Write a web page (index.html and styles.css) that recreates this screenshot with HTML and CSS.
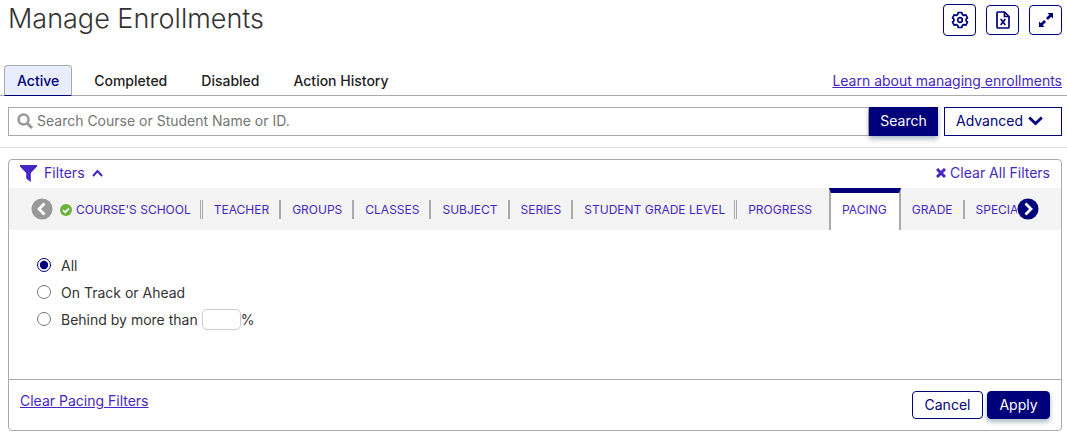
FILE: index.html
```html
<!DOCTYPE html>
<html lang="en">
<head>
    <meta charset="utf-8">
    <title>Manage Enrollments</title>
    <link rel="stylesheet" href="styles.css">
</head>
<body>
    <header class="page-header">
        <h1>Manage Enrollments</h1>
        <div class="header-actions">
            <button type="button" class="icon-button tall" aria-label="Settings">
                <svg width="18" height="18" viewBox="0 0 18 18" fill="none" stroke="currentColor" stroke-width="1.7" stroke-linejoin="round">
                    <path d="M7.2 1.5h3.6l.5 2 1.5.9 2-.6 1.7 3-1.4 1.4v1.6l1.4 1.4-1.7 3-2-.6-1.5.9-.5 2H7.2l-.5-2-1.5-.9-2 .6-1.7-3 1.4-1.4V8.200L1.500 6.800l1.700-3 2 .6 1.500-.9z"/>
                    <circle cx="9" cy="9" r="2.300"/>
                </svg>
            </button>
            <button type="button" class="icon-button" aria-label="Export to Excel">
                <svg width="14" height="18" viewBox="0 0 14 18" fill="none" stroke="currentColor" stroke-width="1.700" stroke-linejoin="round">
                    <path d="M2 1h6.500L13 5.500V16a1 1 0 0 1-1 1H2a1 1 0 0 1-1-1V2a1 1 0 0 1 1-1z"/>
                    <path d="M8.500 1v4.500H13"/>
                    <path d="M4.700 8l4.600 6M9.300 8l-4.600 6"/>
                </svg>
            </button>
            <button type="button" class="icon-button" aria-label="Full screen">
                <svg width="16" height="16" viewBox="0 0 16 16" fill="currentColor">
                    <path d="M9.500 1H15v5.500l-1.800-1.800-3.300 3.300-1.900-1.900 3.300-3.300zM6.500 15H1V9.500l1.800 1.800 3.300-3.300L8 9.900l-3.300 3.300z"/>
                </svg>
            </button>
        </div>
    </header>

    <nav class="page-tabs">
        <a href="#active" class="page-tab active">Active</a>
        <a href="#completed" class="page-tab">Completed</a>
        <a href="#disabled" class="page-tab">Disabled</a>
        <a href="#history" class="page-tab">Action History</a>
        <a href="#learn" class="learn-link">Learn about managing enrollments</a>
    </nav>

    <form class="search-row">
        <label class="search-box">
            <svg width="16" height="16" viewBox="0 0 16 16" fill="none" stroke="#999" stroke-width="2.500">
                <circle cx="6.500" cy="6.500" r="5"/>
                <path d="M10 10l5 5" stroke-width="3"/>
            </svg>
            <input type="text" aria-label="Search" placeholder="Search Course or Student Name or ID.">
        </label>
        <button type="submit" class="search-button">Search</button>
        <button type="button" class="advanced-button">
            Advanced
            <svg width="15" height="10" viewBox="0 0 15 10" fill="none" stroke="currentColor" stroke-width="2.800"><path d="M1.200 1.500l6.300 6 6.300-6"/></svg>
        </button>
    </form>

    <section class="filters">
        <div class="filters-header">
            <button type="button" class="text-button filters-toggle">
                <svg width="17" height="17" viewBox="0 0 17 17" fill="currentColor"><path d="M0 0h17v1.500L10.800 8v9L6.200 13.500V8L0 1.500z"/></svg>
                Filters
                <svg width="11" height="8" viewBox="0 0 11 8" fill="none" stroke="currentColor" stroke-width="2"><path d="M1 7l4.500-5L10 7"/></svg>
            </button>
            <button type="button" class="text-button">
                <svg width="10" height="10" viewBox="0 0 10 10" stroke="currentColor" stroke-width="3"><path d="M1 1l8 8M9 1l-8 8"/></svg>
                Clear All Filters
            </button>
        </div>

        <div class="filter-strip">
            <button type="button" class="scroll-button" aria-label="Previous filters" disabled>
                <svg width="22" height="22" viewBox="0 0 22 22"><circle cx="11" cy="11" r="10.500" fill="currentColor"/><path d="M13.500 5.500L8 11l5.500 5.500" fill="none" stroke="#fff" stroke-width="2.800"/></svg>
            </button>
            <div class="filter-tabs">
                <button type="button" class="filter-tab double">
                    <svg width="12" height="12" viewBox="0 0 12 12"><circle cx="6" cy="6" r="6" fill="#6ab43e"/><path d="M3 6.200l2.200 2.200L9 4.400" fill="none" stroke="#fff" stroke-width="1.700"/></svg>
                    <span>COURSE'S SCHOOL</span>
                </button>
                <button type="button" class="filter-tab">TEACHER</button>
                <button type="button" class="filter-tab">GROUPS</button>
                <button type="button" class="filter-tab">CLASSES</button>
                <button type="button" class="filter-tab">SUBJECT</button>
                <button type="button" class="filter-tab">SERIES</button>
                <button type="button" class="filter-tab double">STUDENT GRADE LEVEL</button>
                <button type="button" class="filter-tab last">PROGRESS</button>
                <button type="button" class="filter-tab selected">PACING</button>
                <button type="button" class="filter-tab">GRADE</button>
                <button type="button" class="filter-tab">SPECIAL</button>
            </div>
            <button type="button" class="scroll-button next" aria-label="More filters">
                <svg width="22" height="22" viewBox="0 0 22 22"><circle cx="11" cy="11" r="10.500" fill="currentColor"/><path d="M8.500 5.500L14 11l-5.500 5.500" fill="none" stroke="#fff" stroke-width="2.800"/></svg>
            </button>
        </div>

        <div class="filter-body">
            <div class="option">
                <input type="radio" name="pacing" id="pacingAll" checked>
                <label for="pacingAll">All</label>
            </div>
            <div class="option">
                <input type="radio" name="pacing" id="pacingAhead">
                <label for="pacingAhead">On Track or Ahead</label>
            </div>
            <div class="option">
                <input type="radio" name="pacing" id="pacingBehind">
                <label for="pacingBehind">Behind by more than</label>
                <input type="text" class="percent" aria-label="Percent behind"><span>%</span>
            </div>
        </div>

        <div class="filters-footer">
            <a href="#clear">Clear Pacing Filters</a>
            <div class="footer-buttons">
                <button type="button" class="cancel-button">Cancel</button>
                <button type="button" class="apply-button">Apply</button>
            </div>
        </div>
    </section>
</body>
</html>
```
FILE: styles.css
```css
* {
    box-sizing: border-box;
}

body {
    margin: 0;
    font-family: Inter, "Liberation Sans", sans-serif;
    font-size: 14px;
    line-height: 20px;
    color: #333;
    background-color: #fff;
}

button, input {
    font: inherit;
}

button {
    cursor: pointer;
}

a {
    color: #4527c4;
}

.page-header {
    display: flex;
    justify-content: space-between;
    align-items: flex-start;
    padding: 4px 5px 0 8px;
    height: 65px;
}

h1 {
    margin: 0;
    font-size: 27px;
    line-height: 30px;
    font-weight: 300;
}

.header-actions {
    display: flex;
    align-items: center;
    gap: 10px;
}

.icon-button {
    display: flex;
    align-items: center;
    justify-content: center;
    width: 33px;
    height: 30px;
    padding: 0;
    border: 1px solid #00007b;
    border-radius: 4px;
    background-color: #fff;
    color: #00007b;
}

.icon-button.tall {
    height: 32px;
}

.page-tabs {
    display: flex;
    height: 31px;
    padding: 0 5px 0 4px;
    border-bottom: 1px solid #aaa;
    gap: 10px;
}

.page-tab {
    height: 31px;
    padding: 6px 12px;
    font-weight: 500;
    color: #222;
    text-decoration: none;
}

.page-tab.active {
    padding: 5px 12px;
    border: 1px solid #aaa;
    border-bottom-color: #00007b;
    border-radius: 4px 4px 0 0;
    background-color: #e8eefe;
    color: #00007b;
}

.learn-link {
    margin-left: auto;
    padding-top: 6px;
}

.search-row {
    display: flex;
    padding: 11px 5px 11px 8px;
    border-bottom: 1px solid #ddd;
}

.search-box {
    display: flex;
    flex: 1;
    align-items: center;
    gap: 4px;
    height: 29px;
    padding: 0 0 1px 8px;
    border: 1px solid #aaa;
}

.search-box input {
    flex: 1;
    padding: 0;
    border: none;
    outline: none;
}

.search-box input::placeholder {
    color: #757575;
}

.search-button {
    width: 69px;
    padding: 0 0 1px;
    border: 1px solid #00007b;
    background-color: #00007b;
    color: #fff;
    box-shadow: 0 3px 5px rgba(0, 50, 80, 0.35);
}

.advanced-button {
    display: flex;
    align-items: center;
    gap: 5px;
    width: 118px;
    margin-left: 6px;
    padding: 0 11px 1px;
    border: 1px solid #00007b;
    background-color: #fff;
    color: #00007b;
}

.filters {
    margin: 11px 5px 9px 8px;
    border: 1px solid #aaa;
    border-radius: 4px;
}

.filters-header {
    display: flex;
    justify-content: space-between;
    height: 28px;
    padding: 0 11px 2px;
}

.text-button {
    display: flex;
    align-items: center;
    gap: 4px;
    padding: 0;
    border: none;
    background: none;
    color: #4527c4;
}

.filters-toggle {
    gap: 7px;
}

.filter-strip {
    display: flex;
    align-items: center;
    height: 42px;
    padding: 0 22px;
    background-color: #f4f4f4;
}

.scroll-button {
    display: flex;
    flex: none;
    padding: 0;
    border: none;
    background: none;
    color: #999;
}

.scroll-button.next {
    color: #00007b;
}

.filter-tabs {
    display: flex;
    flex: 1;
    align-items: center;
    height: 42px;
    padding-left: 7px;
    overflow: hidden;
}

.filter-tab {
    display: flex;
    flex: none;
    align-items: center;
    gap: 4px;
    height: 19px;
    margin-right: 11px;
    padding: 1px 10px 0 0;
    border: none;
    border-right: 2px solid #aaa;
    background: none;
    font-size: 12px;
    color: #4527c4;
    white-space: nowrap;
}

.filter-tab.double {
    padding-right: 9px;
    border-right: 3px double #aaa;
}

.filter-tab.last {
    margin-right: 0;
    padding-right: 17px;
    border-right: none;
}

.filter-tab.selected {
    height: 42px;
    padding: 0 12px 4px 11px;
    border: 2px solid #aaa;
    border-top: 5px solid #00007b;
    border-bottom: none;
    background-color: #fff;
}

.filter-body {
    height: 149px;
    padding: 22px 28px;
}

.option {
    display: flex;
    align-items: center;
    height: 27px;
}

.option input[type="radio"] {
    width: 14px;
    height: 14px;
    margin: 0 10px 2px 0;
    accent-color: #00007b;
}

.percent {
    width: 39px;
    height: 21px;
    margin-left: 4px;
    border: 1px solid #ccc;
    border-radius: 5px;
}

.filters-footer {
    display: flex;
    justify-content: space-between;
    align-items: flex-start;
    padding: 11px;
    border-top: 1px solid #aaa;
}

.footer-buttons {
    display: flex;
    gap: 4px;
}

.cancel-button, .apply-button {
    height: 28px;
    width: 71px;
    padding: 0;
    border: 1px solid #00007b;
    border-radius: 4px;
    background-color: #fff;
    color: #00007b;
}

.apply-button {
    width: 63px;
    background-color: #00007b;
    color: #fff;
    box-shadow: 0 3px 5px rgba(0, 50, 80, 0.35);
}
```
